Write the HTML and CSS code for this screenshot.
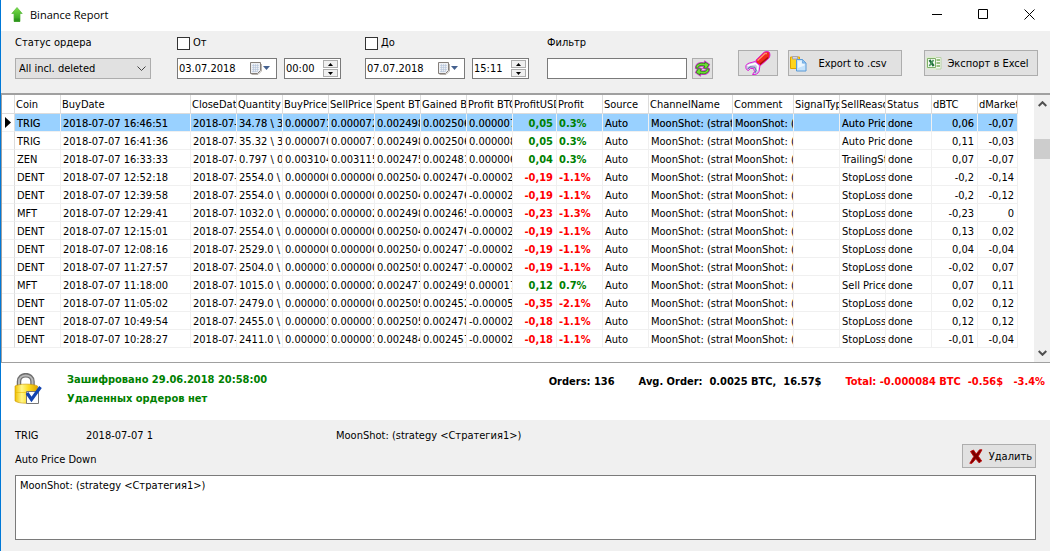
FILE: index.html
```html
<!DOCTYPE html>
<html lang="ru">
<head>
    <meta charset="UTF-8">
    <meta name="viewport" content="width=device-width, initial-scale=1.0">
    <title>Binance Report</title>
    <link rel="stylesheet" href="styles.css">
</head>
<body>
    <header class="titlebar">
        <svg class="app-icon" width="12" height="16" viewBox="0 0 12 16">
            <defs>
                <linearGradient id="arrowFill" x1="0" y1="0" x2="0" y2="1">
                    <stop offset="0" stop-color="#7be04a"/>
                    <stop offset="1" stop-color="#2a9a1c"/>
                </linearGradient>
            </defs>
            <path d="M6 .5 11.2 6.5H9V14.5H3V6.5H.8Z" fill="url(#arrowFill)" stroke="#58b83a" stroke-width=".7"/>
            <path d="M3 11.5H9V15H3Z" fill="#2c8f1d" opacity=".6"/>
        </svg>
        <h1>Binance Report</h1>
        <div class="window-buttons">
            <button type="button" aria-label="Minimize"><svg width="11" height="11" viewBox="0 0 11 11"><path d="M0 5.5H10" /></svg></button>
            <button type="button" aria-label="Maximize"><svg width="11" height="11" viewBox="0 0 11 11"><path d="M.5 .5H9.5V9.5H.5Z" /></svg></button>
            <button type="button" aria-label="Close"><svg width="11" height="11" viewBox="0 0 11 11"><path d="M.5 .5 10.5 10.5M10.5 .5 .5 10.5" /></svg></button>
        </div>
    </header>

    <form class="toolbar">
        <div class="field field-status">
            <label for="status">Статус ордера</label>
            <div class="select-box">
                <select id="status">
                    <option>All incl. deleted</option>
                </select>
                <svg class="chevron" width="9" height="6" viewBox="0 0 9 6"><path d="M.5 .5 4.5 4.5 8.5 .5"/></svg>
            </div>
        </div>

        <div class="field field-from">
            <label><input type="checkbox" class="tick">От</label>
            <div class="controls">
                <div class="box date-box">
                    <input type="text" value="03.07.2018" aria-label="Дата от">
                    <button type="button" class="picker" aria-label="Календарь"><svg width="21" height="13" viewBox="0 0 21 13"><path d="M2.5 12.5H9L12.5 9V2" fill="none" stroke="#b9b4ae"/><path d="M1.5 .5H11.5V8.5L8.5 11.5H1.5Z" fill="#eef0f4" stroke="#857f7a"/><path d="M3 3.5H10M3 5.5H10M3 7.5H10M3 9.5H8M4.5 2V10M6.5 2V10M8.5 2V10" stroke="#b4c2d8" stroke-width=".6" /><path d="M14 4H21L17.5 8Z" fill="#44618f"/></svg></button>
                </div>
                <div class="box time-box">
                    <input type="text" value="00:00" aria-label="Время от">
                    <div class="spin">
                        <button type="button" aria-label="Больше"><svg width="5" height="3" viewBox="0 0 5 3"><path d="M0 3 2.5 0 5 3Z"/></svg></button>
                        <button type="button" aria-label="Меньше"><svg width="5" height="3" viewBox="0 0 5 3"><path d="M0 0H5L2.5 3Z"/></svg></button>
                    </div>
                </div>
            </div>
        </div>

        <div class="field field-to">
            <label><input type="checkbox" class="tick">До</label>
            <div class="controls">
                <div class="box date-box">
                    <input type="text" value="07.07.2018" aria-label="Дата до">
                    <button type="button" class="picker" aria-label="Календарь"><svg width="21" height="13" viewBox="0 0 21 13"><path d="M2.5 12.5H9L12.5 9V2" fill="none" stroke="#b9b4ae"/><path d="M1.5 .5H11.5V8.5L8.5 11.5H1.5Z" fill="#eef0f4" stroke="#857f7a"/><path d="M3 3.5H10M3 5.5H10M3 7.5H10M3 9.5H8M4.5 2V10M6.5 2V10M8.5 2V10" stroke="#b4c2d8" stroke-width=".6" /><path d="M14 4H21L17.5 8Z" fill="#44618f"/></svg></button>
                </div>
                <div class="box time-box">
                    <input type="text" value="15:11" aria-label="Время до">
                    <div class="spin">
                        <button type="button" aria-label="Больше"><svg width="5" height="3" viewBox="0 0 5 3"><path d="M0 3 2.5 0 5 3Z"/></svg></button>
                        <button type="button" aria-label="Меньше"><svg width="5" height="3" viewBox="0 0 5 3"><path d="M0 0H5L2.5 3Z"/></svg></button>
                    </div>
                </div>
            </div>
        </div>

        <div class="field">
            <label for="filter">Фильтр</label>
            <div class="controls controls-filter">
                <input type="text" id="filter" class="box filter-box">
                <button type="button" class="btn btn-refresh" aria-label="Обновить">
                    <svg width="17" height="17" viewBox="0 0 17 17" stroke-linejoin="round">
                        <path d="M1.500 8.500C1.500 3.500 6 1.500 10.500 3V1L15.500 4.500 13 9 9 8.500 10 6.500C7 5.500 5 6 4 9Z" fill="#7be038" stroke="#d23ad2" stroke-width="1.200"/>
                        <path d="M15.500 8.500C15.500 13.500 11 15.500 6.500 14V16L1.500 12.500 4 8 8 8.500 7 10.500C10 11.500 12 11 13 8Z" fill="#7be038" stroke="#d23ad2" stroke-width="1.200"/>
                        <path d="M2 8C2 4 6.500 2.300 11 3.700V2L14.800 4.600 12.600 8.300 9.900 8 10.800 6C7 4.700 4.500 5.500 3.600 8.300ZM15 9C15 13 10.500 14.700 6 13.300V15L2.200 12.400 4.400 8.700 7.100 9 6.200 11C10 12.300 12.500 11.500 13.400 8.700Z" fill="#72dc34" stroke="#257d16" stroke-width=".8"/>
                    </svg>
                </button>
            </div>
        </div>

        <div class="actions">
            <button type="button" class="btn btn-tools" aria-label="Настройки">
                <svg width="26" height="24" viewBox="0 0 26 24">
                    <path d="M11 9 19 1.300C20.500 .3 23.500 .3 24.500 1.500 25.300 4 25 6 23.500 7.500L15.500 14.500 11 12Z" fill="#f0281a" stroke="#e01ad8"/>
                    <path d="M12.500 9.500 20 2.500 22 2.500" fill="none" stroke="#ff8a70" stroke-width="1.500"/>
                    <path d="M15 13.300 23 6.500" stroke="#a80c0c" stroke-width="1.300"/>
                    <path d="M1 14.500C2.500 11.500 6 12 10 10.500L15 14.500 14 20.500C13 22.500 11 24 7.500 23.500L9.500 20.500 8.500 17.500 5.500 17.500 3.500 19.500C1 19 .5 17 1 14.500Z" fill="#cfcfe8" stroke="#e01ad8"/>
                    <path d="M2.500 15C5 13 8 13.500 10.500 12.500L13 15 12.500 19.500" fill="none" stroke="#fff" stroke-width="1.400"/>
                    <path d="M2.800 17.700 5.300 15.800 9.700 16.200 11.200 19.500 9.800 22" fill="none" stroke="#6c6cae" stroke-width="1.100"/>
                </svg>
            </button>
            <button type="button" class="btn btn-csv">
                <svg width="17" height="17" viewBox="0 0 17 17">
                    <path d="M.5 2H9.500V13.500H.5Z" fill="#ffd51e" stroke="#e0a400"/>
                    <path d="M2.500 1.500H7.500V4H2.500Z" fill="#d8d8e4" stroke="#9a9aae" stroke-width=".8"/>
                    <path d="M6.500 4.500H12.500L16 8V16H6.500Z" fill="#c4e2fb" stroke="#5b9ad6"/>
                    <path d="M8 6.200H11.800V9H14.500V10.500L8 13Z" fill="#eaf6ff"/>
                    <path d="M12.500 4.500V8H16Z" fill="#8fc4f2" stroke="#5b9ad6" stroke-width=".6"/>
                </svg>
                <span>Export to .csv</span>
            </button>
            <button type="button" class="btn btn-excel">
                <svg width="16" height="16" viewBox="0 0 16 16">
                    <path d="M9 2.500H15V14H9Z" fill="#f4faef" stroke="#b8d2a6"/>
                    <path d="M10.500 5H14M10.500 8H14M10.500 11H14" stroke="#79ac5b" stroke-width="1.700"/>
                    <path d="M0 2 10 .8V15.200L0 14Z" fill="#dcebd0"/>
                    <path d="M1.500 3.500H9.500V12.500H1.500Z" fill="#f7fbf3" stroke="#7fb069"/>
                    <path d="M3.500 5 7.700 11" stroke="#1e7038" stroke-width="2.200"/>
                    <path d="M7.500 5 3.300 11" stroke="#4a9660" stroke-width="1.600"/>
                </svg>
                <span>Экспорт в Excel</span>
            </button>
        </div>
    </form>

    <main class="grid">
        <div class="grid-scroll">
            <table>
                <colgroup>
                    <col class="c-mark"><col class="c-std"><col class="c-date"><col class="c-std"><col class="c-std">
                    <col class="c-std"><col class="c-std"><col class="c-std"><col class="c-std"><col class="c-std">
                    <col class="c-usd"><col class="c-std"><col class="c-std"><col class="c-channel"><col class="c-comment">
                    <col class="c-std"><col class="c-std"><col class="c-std"><col class="c-std"><col class="c-market">
                </colgroup>
                <thead>
                    <tr><th></th><th>Coin</th><th>BuyDate</th><th>CloseDate</th><th>Quantity</th><th>BuyPrice</th><th>SellPrice</th><th>Spent BTC</th><th>Gained BTC</th><th>Profit BTC</th><th>ProfitUSD</th><th>Profit</th><th>Source</th><th>ChannelName</th><th>Comment</th><th>SignalType</th><th>SellReason</th><th>Status</th><th>dBTC</th><th>dMarket</th></tr>
                </thead>
                <tbody>
                    <tr class="selected"><td><svg class="marker" width="6" height="11" viewBox="0 0 6 11"><path d="M0 0 6 5.500 0 11Z"/></svg></td><td>TRIG</td><td>2018-07-07 16:46:51</td><td>2018-07-07</td><td>34.78 \ 34.78</td><td>0.000071</td><td>0.000072</td><td>0.002498</td><td>0.002506</td><td>0.000007</td><td class="num up">0,05</td><td class="up">0.3%</td><td>Auto</td><td>MoonShot: (strategy</td><td>MoonShot: (strategy</td><td></td><td>Auto Price Down</td><td>done</td><td class="num">0,06</td><td class="num">-0,07</td></tr>
                    <tr><td></td><td>TRIG</td><td>2018-07-07 16:41:36</td><td>2018-07-07</td><td>35.32 \ 35.32</td><td>0.000070</td><td>0.000071</td><td>0.002498</td><td>0.002506</td><td>0.000008</td><td class="num up">0,05</td><td class="up">0.3%</td><td>Auto</td><td>MoonShot: (strategy</td><td>MoonShot: (strategy</td><td></td><td>Auto Price Down</td><td>done</td><td class="num">0,11</td><td class="num">-0,03</td></tr>
                    <tr><td></td><td>ZEN</td><td>2018-07-07 16:33:33</td><td>2018-07-07</td><td>0.797 \ 0.797</td><td>0.003104</td><td>0.003115</td><td>0.002475</td><td>0.002481</td><td>0.000006</td><td class="num up">0,04</td><td class="up">0.3%</td><td>Auto</td><td>MoonShot: (strategy</td><td>MoonShot: (strategy</td><td></td><td>TrailingStop</td><td>done</td><td class="num">0,07</td><td class="num">-0,07</td></tr>
                    <tr><td></td><td>DENT</td><td>2018-07-07 12:52:18</td><td>2018-07-07</td><td>2554.0 \ 2554.0</td><td>0.000000</td><td>0.000000</td><td>0.002504</td><td>0.002476</td><td>-0.000028</td><td class="num down">-0,19</td><td class="down">-1.1%</td><td>Auto</td><td>MoonShot: (strategy</td><td>MoonShot: (strategy</td><td></td><td>StopLoss</td><td>done</td><td class="num">-0,2</td><td class="num">-0,14</td></tr>
                    <tr><td></td><td>DENT</td><td>2018-07-07 12:39:58</td><td>2018-07-07</td><td>2554.0 \ 2554.0</td><td>0.000000</td><td>0.000000</td><td>0.002504</td><td>0.002476</td><td>-0.000028</td><td class="num down">-0,19</td><td class="down">-1.1%</td><td>Auto</td><td>MoonShot: (strategy</td><td>MoonShot: (strategy</td><td></td><td>StopLoss</td><td>done</td><td class="num">-0,2</td><td class="num">-0,12</td></tr>
                    <tr><td></td><td>MFT</td><td>2018-07-07 12:29:41</td><td>2018-07-07</td><td>1032.0 \ 1032.0</td><td>0.000002</td><td>0.000002</td><td>0.002498</td><td>0.002465</td><td>-0.000033</td><td class="num down">-0,23</td><td class="down">-1.3%</td><td>Auto</td><td>MoonShot: (strategy</td><td>MoonShot: (strategy</td><td></td><td>StopLoss</td><td>done</td><td class="num">-0,23</td><td class="num">0</td></tr>
                    <tr><td></td><td>DENT</td><td>2018-07-07 12:15:01</td><td>2018-07-07</td><td>2554.0 \ 2554.0</td><td>0.000000</td><td>0.000000</td><td>0.002504</td><td>0.002476</td><td>-0.000028</td><td class="num down">-0,19</td><td class="down">-1.1%</td><td>Auto</td><td>MoonShot: (strategy</td><td>MoonShot: (strategy</td><td></td><td>StopLoss</td><td>done</td><td class="num">0,13</td><td class="num">0,02</td></tr>
                    <tr><td></td><td>DENT</td><td>2018-07-07 12:08:16</td><td>2018-07-07</td><td>2529.0 \ 2529.0</td><td>0.000000</td><td>0.000000</td><td>0.002504</td><td>0.002477</td><td>-0.000027</td><td class="num down">-0,19</td><td class="down">-1.1%</td><td>Auto</td><td>MoonShot: (strategy</td><td>MoonShot: (strategy</td><td></td><td>StopLoss</td><td>done</td><td class="num">0,04</td><td class="num">-0,04</td></tr>
                    <tr><td></td><td>DENT</td><td>2018-07-07 11:27:57</td><td>2018-07-07</td><td>2504.0 \ 2504.0</td><td>0.000001</td><td>0.000000</td><td>0.002505</td><td>0.002477</td><td>-0.000028</td><td class="num down">-0,19</td><td class="down">-1.1%</td><td>Auto</td><td>MoonShot: (strategy</td><td>MoonShot: (strategy</td><td></td><td>StopLoss</td><td>done</td><td class="num">-0,02</td><td class="num">0,07</td></tr>
                    <tr><td></td><td>MFT</td><td>2018-07-07 11:18:00</td><td>2018-07-07</td><td>1015.0 \ 1015.0</td><td>0.000002</td><td>0.000002</td><td>0.002477</td><td>0.002495</td><td>0.000017</td><td class="num up">0,12</td><td class="up">0.7%</td><td>Auto</td><td>MoonShot: (strategy</td><td>MoonShot: (strategy</td><td></td><td>Sell Price</td><td>done</td><td class="num">0,07</td><td class="num">0,11</td></tr>
                    <tr><td></td><td>DENT</td><td>2018-07-07 11:05:02</td><td>2018-07-07</td><td>2479.0 \ 2479.0</td><td>0.000001</td><td>0.000000</td><td>0.002505</td><td>0.002452</td><td>-0.000053</td><td class="num down">-0,35</td><td class="down">-2.1%</td><td>Auto</td><td>MoonShot: (strategy</td><td>MoonShot: (strategy</td><td></td><td>StopLoss</td><td>done</td><td class="num">0,02</td><td class="num">0,12</td></tr>
                    <tr><td></td><td>DENT</td><td>2018-07-07 10:49:54</td><td>2018-07-07</td><td>2455.0 \ 2455.0</td><td>0.000001</td><td>0.000001</td><td>0.002505</td><td>0.002478</td><td>-0.000027</td><td class="num down">-0,18</td><td class="down">-1.1%</td><td>Auto</td><td>MoonShot: (strategy</td><td>MoonShot: (strategy</td><td></td><td>StopLoss</td><td>done</td><td class="num">0,12</td><td class="num">0,12</td></tr>
                    <tr><td></td><td>DENT</td><td>2018-07-07 10:28:27</td><td>2018-07-07</td><td>2411.0 \ 2411.0</td><td>0.000001</td><td>0.000001</td><td>0.002484</td><td>0.002457</td><td>-0.000027</td><td class="num down">-0,18</td><td class="down">-1.1%</td><td>Auto</td><td>MoonShot: (strategy</td><td>MoonShot: (strategy</td><td></td><td>StopLoss</td><td>done</td><td class="num">-0,01</td><td class="num">-0,04</td></tr>
                </tbody>
            </table>
        </div>
        <div class="scrollbar">
            <button type="button" aria-label="Вверх"><svg width="9" height="6" viewBox="0 0 9 6"><path d="M.7 5 4.500 1.200 8.300 5"/></svg></button>
            <div class="track"><div class="thumb"></div></div>
            <button type="button" aria-label="Вниз"><svg width="9" height="6" viewBox="0 0 9 6"><path d="M.7 1 4.500 4.800 8.300 1"/></svg></button>
        </div>
    </main>

    <section class="summary">
        <svg class="lock" width="28" height="32" viewBox="0 0 28 32">
            <defs>
                <linearGradient id="lockFill" x1="0" y1="0" x2="1" y2="0">
                    <stop offset="0" stop-color="#f0c000"/>
                    <stop offset=".3" stop-color="#fff68a"/>
                    <stop offset=".6" stop-color="#fddc20"/>
                    <stop offset="1" stop-color="#dca400"/>
                </linearGradient>
            </defs>
            <path d="M5 14V8.500C5 0 18.500 0 18.500 8.500V14" fill="none" stroke="#6f6f6f" stroke-width="4.500"/>
            <path d="M5 14V8.500C5 .6 18.500 .6 18.500 8.500V14" fill="none" stroke="#b9b9b9" stroke-width="2"/>
            <path d="M1 13C5 10.500 19 10.500 23.500 13V28C19 31 5 31 1 28Z" fill="url(#lockFill)" stroke="#c79300" stroke-width=".6"/>
            <path d="M1.500 19.500H12" stroke="#e8b800" stroke-width=".6"/>
            <path d="M12.500 18.500H24.500V30.500H12.500Z" fill="#fff" stroke="#777"/>
            <path d="M13 20 17.500 26.500 26.500 14" fill="none" stroke="#1244b0" stroke-width="3.200"/>
        </svg>
        <div class="state">
            <p>Зашифровано 29.06.2018 20:58:00</p>
            <p>Удаленных ордеров нет</p>
        </div>
        <div class="totals">
            <span>Orders: 136</span>
            <span>Avg. Order:&nbsp; 0.0025 BTC,&nbsp; 16.57$</span>
            <span class="down">Total: -0.000084 BTC&nbsp; -0.56$ &nbsp; -3.4%</span>
        </div>
    </section>

    <section class="details">
        <div class="details-head">
            <div class="info">
                <span>TRIG</span>
                <span>2018-07-07 1</span>
                <span>MoonShot: (strategy &lt;Стратегия1&gt;)</span>
                <span class="reason">Auto Price Down</span>
            </div>
            <button type="button" class="btn btn-delete">
                <svg width="14" height="15" viewBox="0 0 14 15">
                    <path d="M1.500 2.500 4.500 1 7.200 5 10.500 .8H13L9.300 7.200 12.700 12 10 13.800 6.800 9.800 3 14.300H.8L4.800 7.500Z" fill="#7d0000" stroke="#c00808" stroke-width=".9"/>
                </svg>
                <span>Удалить</span>
            </button>
        </div>
        <textarea aria-label="Comment">MoonShot: (strategy &lt;Стратегия1&gt;)</textarea>
    </section>
</body>
</html>
```
FILE: styles.css
```css
* {
    box-sizing: border-box;
}
body {
    margin: 0;
    min-height: 100vh;
    display: flex;
    flex-direction: column;
    border-left: 1px solid #0078d7;
    background-color: #f0f0f0;
    color: #000;
    font-family: "DejaVu Sans Condensed", "DejaVu Sans", sans-serif;
    font-size: 11px;
    line-height: 14px;
}
button, input, select, textarea {
    margin: 0;
    padding: 0;
    border: 0;
    border-radius: 0;
    font: inherit;
    color: inherit;
}
button {
    display: flex;
    align-items: center;
    justify-content: center;
}
svg {
    display: block;
    flex: none;
}
p {
    margin: 0;
}

/* title bar */
.titlebar {
    display: flex;
    align-items: center;
    height: 31px;
    padding: 0 15px 2px 10px;
    background: #fff;
}
.titlebar h1 {
    margin: 0 0 0 7px;
    font-family: "Open Sans", sans-serif;
    font-size: 11px;
    font-weight: normal;
}
.window-buttons {
    display: flex;
    gap: 35px;
    margin-left: auto;
}
.window-buttons button {
    background: none;
}
.window-buttons path {
    fill: none;
    stroke: #000;
}

/* toolbar */
.toolbar {
    display: flex;
    padding: 5px 12px 14px 14px;
}
.field {
    display: flex;
    flex-direction: column;
    gap: 8px;
}
.field label {
    display: flex;
    align-items: center;
    gap: 3px;
    height: 14px;
}
.field-status {
    margin-right: 26px;
}
.field-from {
    margin-right: 24px;
}
.field-to {
    margin-right: 18px;
}
.tick {
    appearance: none;
    width: 13px;
    height: 13px;
    border: 1px solid #333;
    background: #fff;
}
.controls {
    display: flex;
    gap: 7px;
}
.controls-filter {
    gap: 5px;
}
.select-box {
    position: relative;
    width: 136px;
}
.select-box select {
    appearance: none;
    display: block;
    width: 100%;
    height: 21px;
    padding: 1px 3px 0;
    border: 1px solid #adadad;
    background: #e1e1e1;
}
.chevron {
    position: absolute;
    right: 5px;
    top: 8px;
    fill: none;
    stroke: #444;
    pointer-events: none;
}
.box {
    display: flex;
    align-items: center;
    height: 21px;
    border: 1px solid #7a7a7a;
    background: #fff;
}
.box input {
    flex: 1;
    min-width: 0;
    padding: 1px 0 0 1px;
    background: none;
}
.date-box {
    width: 100px;
    padding-right: 6px;
}
.picker {
    background: none;
}
.time-box {
    width: 57px;
    padding-right: 2px;
}
.spin {
    display: flex;
    flex-direction: column;
    gap: 1px;
}
.spin button {
    width: 15px;
    height: 8px;
    border: 1px solid #adadad;
    background: #f0f0f0;
}
.filter-box {
    width: 140px;
}
.btn {
    border: 1px solid #adadad;
    background: #e1e1e1;
}
.btn span {
    padding-top: 2px;
}
.btn-refresh {
    width: 21px;
    height: 21px;
}
.actions {
    display: flex;
    gap: 10px;
    height: 26px;
    margin: 14px 0 0 auto;
}
.btn-tools {
    width: 40px;
}
.btn-csv, .btn-excel {
    width: 114px;
    padding: 0 3px 0 1px;
    justify-content: flex-start;
}
.btn-csv span, .btn-excel span {
    flex: 1;
    text-align: center;
}
.btn-excel {
    margin-left: 12px;
}

/* orders */
.grid {
    flex: 1;
    display: flex;
    border: solid #a0a0a0;
    border-width: 2px 0 1px 1px;
    background: #fff;
}
.grid-scroll {
    flex: 1;
    min-width: 0;
    overflow: hidden;
    padding-bottom: 13px;
}
table {
    width: 1016px;
    table-layout: fixed;
    border-collapse: separate;
    border-spacing: 0;
}
.c-mark { width: 13px; }
.c-std { width: 46px; }
.c-date { width: 130px; }
.c-usd { width: 44px; }
.c-channel { width: 84px; }
.c-comment { width: 61px; }
.c-market { width: 40px; }
th, td {
    height: 18px;
    padding: 2px 3px 0 2px;
    border-right: 1px solid #f0f0f0;
    border-bottom: 1px solid #f0f0f0;
    overflow: hidden;
    white-space: nowrap;
    text-align: left;
    font-weight: normal;
}
th {
    height: 19px;
    padding-left: 1px;
    border-color: #dcdcdc;
}
td:first-child {
    padding: 0 3px;
    border-right-color: #dcdcdc;
}
.num {
    text-align: right;
}
.up {
    color: #008000;
    font-weight: bold;
}
.down {
    color: #f00;
    font-weight: bold;
}
.selected td:not(:first-child) {
    background: #99d1ff;
    text-shadow: 0 0 0 rgba(0, 0, 0, 0.4);
}
.selected td.up {
    text-shadow: none;
}
.scrollbar {
    display: flex;
    flex-direction: column;
    width: 16px;
    background: #f0f0f0;
}
.scrollbar button {
    width: 16px;
    height: 18px;
    background: none;
}
.scrollbar path {
    fill: none;
    stroke: #505050;
    stroke-width: 2;
}
.track {
    flex: 1;
    padding-top: 26px;
}
.thumb {
    height: 20px;
    background: #cdcdcd;
}

/* summary */
.summary {
    display: flex;
    padding: 7px 5px 12px 13px;
    background: #fff;
    font-weight: bold;
}
.lock {
    margin-top: 3px;
}
.state {
    margin-left: 25px;
    color: #008000;
    line-height: 19px;
}
.totals {
    display: flex;
    gap: 24px;
    margin: 5px 0 0 auto;
    white-space: nowrap;
}

/* details */
.details {
    padding: 8px 14px 11px;
}
.details-head {
    display: flex;
    align-items: flex-end;
    justify-content: space-between;
}
.info {
    display: grid;
    grid-template-columns: 71px 250px auto;
    row-gap: 8px;
    line-height: 16px;
}
.reason {
    grid-column: 1 / -1;
}
.btn-delete {
    gap: 6px;
    height: 24px;
    padding: 0 3px 0 6px;
}
.details textarea {
    display: block;
    width: 100%;
    height: 65px;
    margin-top: 7px;
    padding: 3px 4px;
    border: 1px solid #7a7a7a;
    background: #fff;
    resize: none;
}
```
